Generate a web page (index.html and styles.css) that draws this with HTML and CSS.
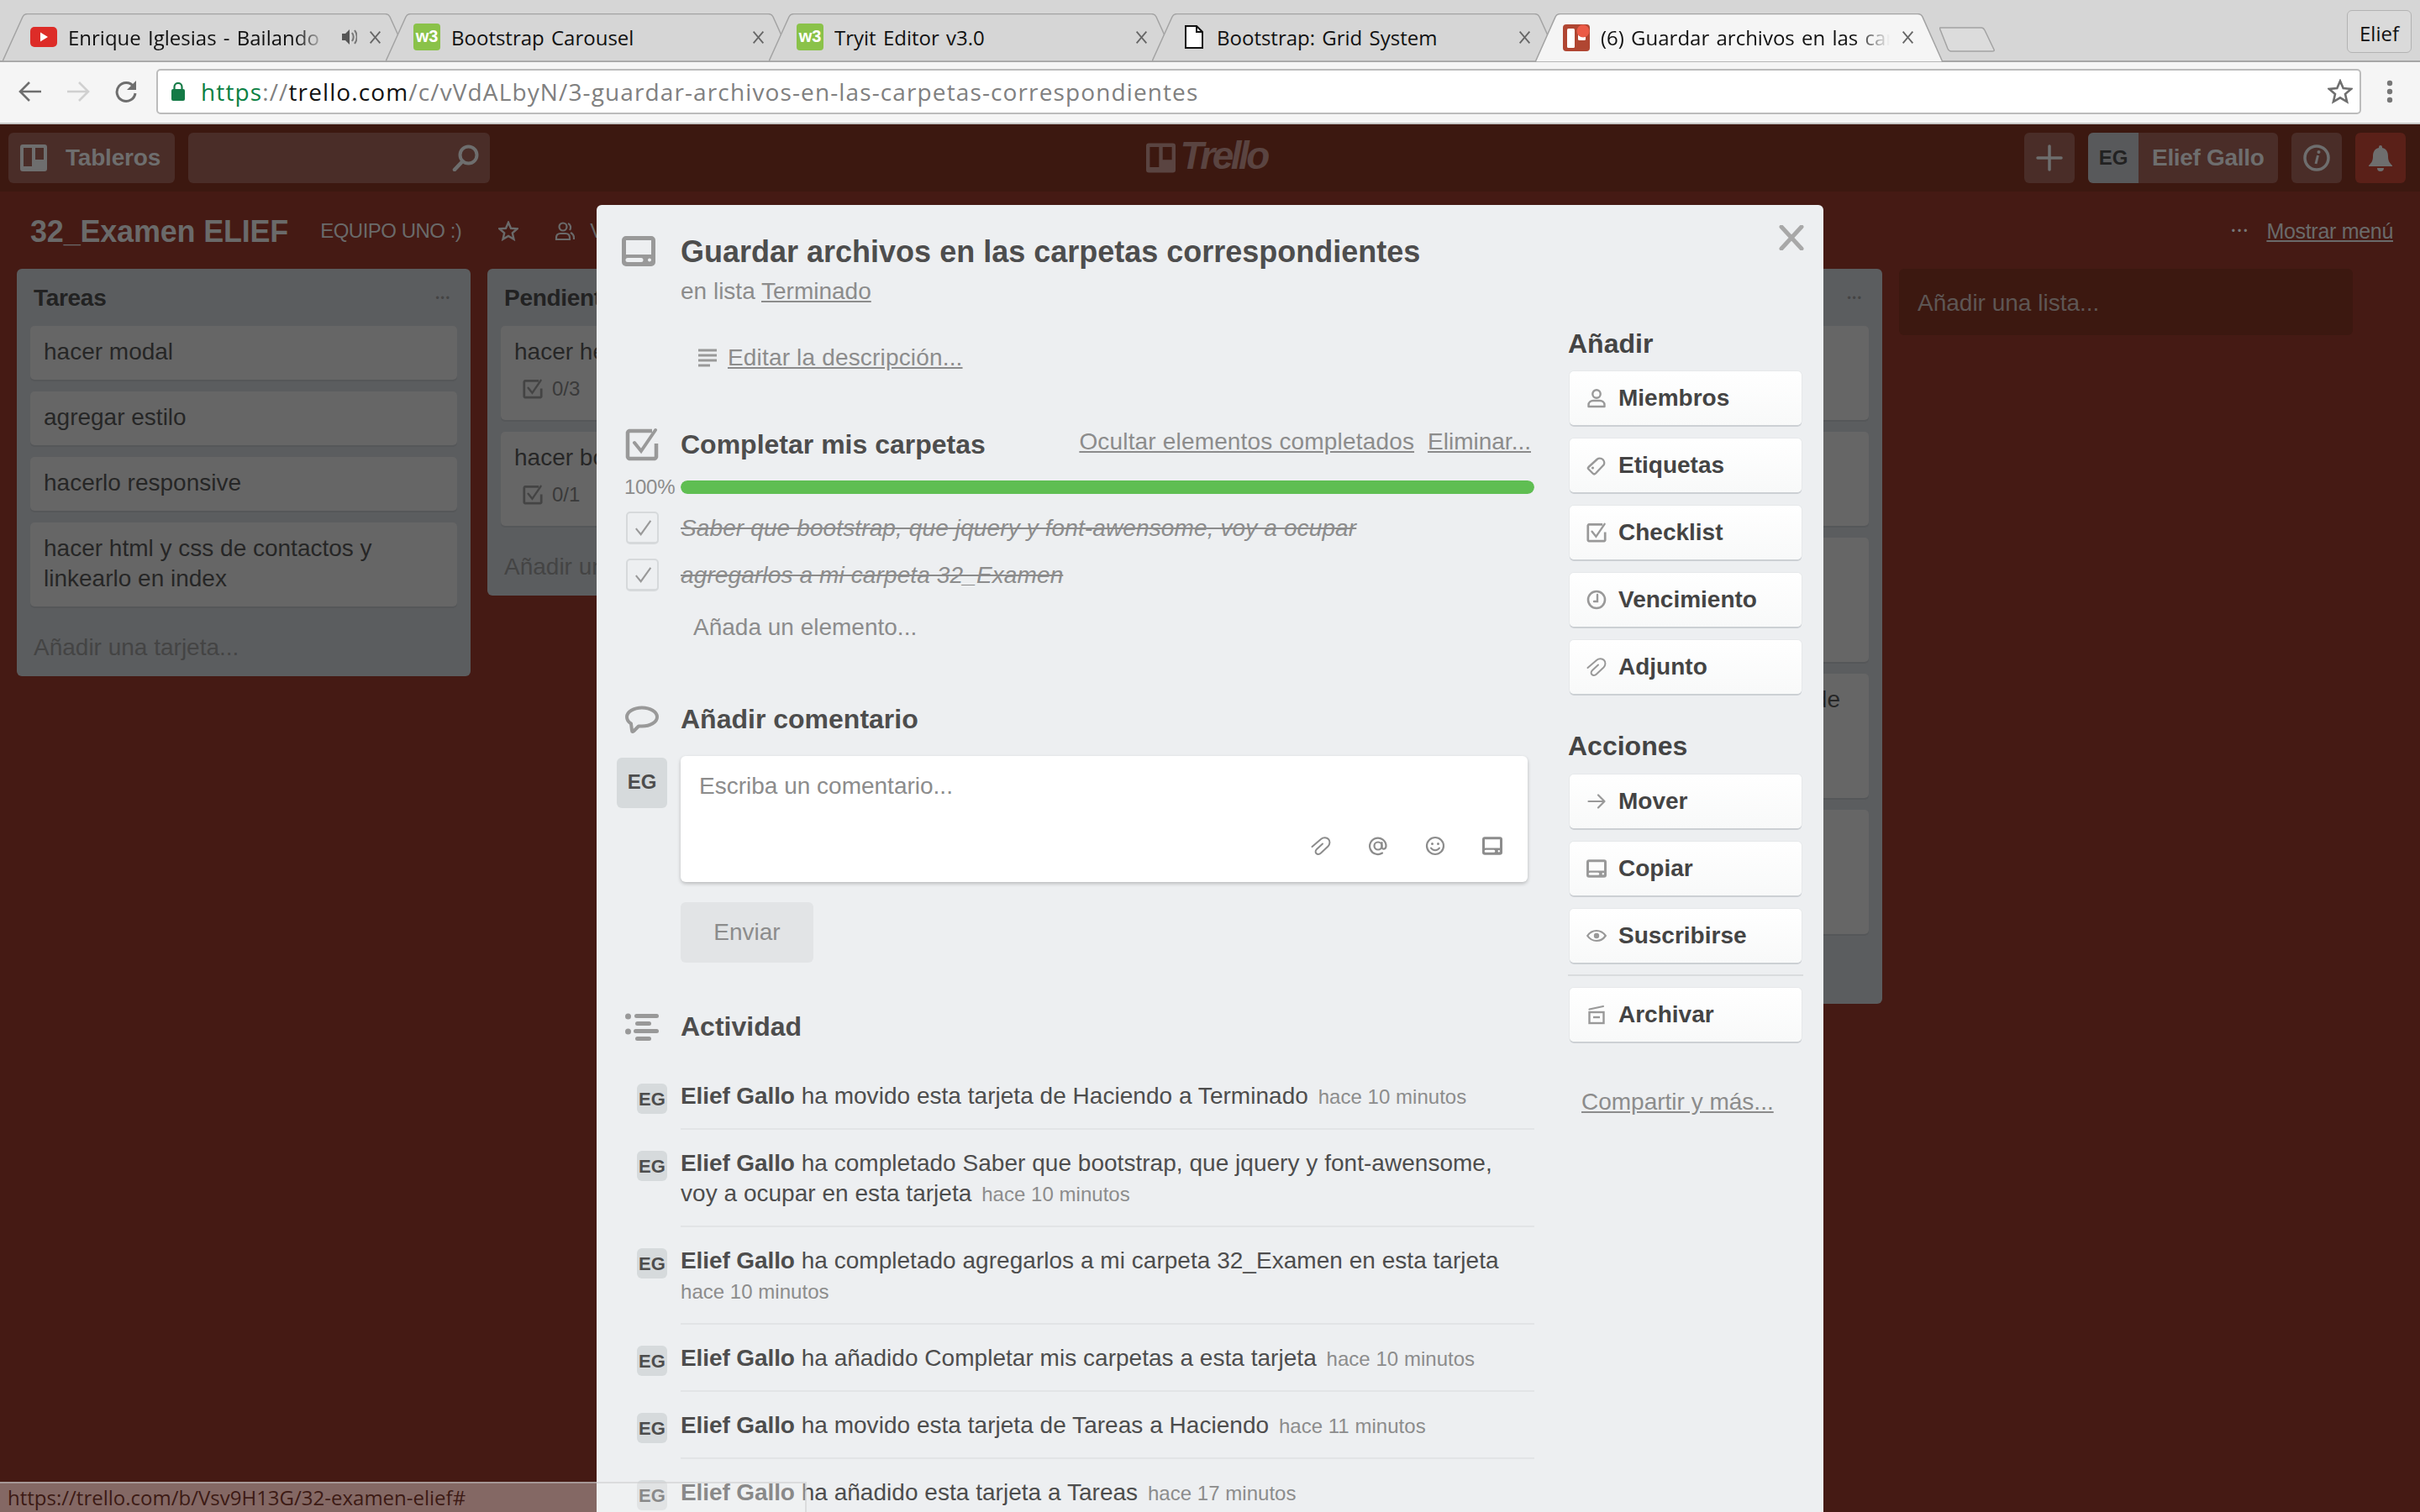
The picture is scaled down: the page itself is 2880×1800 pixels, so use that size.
FILE: index.html
```html
<!DOCTYPE html>
<html lang="es">
<head>
<meta charset="utf-8">
<title>Guardar archivos en las carpetas correspondientes</title>
<link rel="stylesheet" href="styles.css">
</head>
<body>
<svg class="defs" width="0" height="0" aria-hidden="true">
  <defs>
    <symbol id="i-card" viewBox="0 0 40 36"><path fill="currentColor" fill-rule="evenodd" d="M5 0h30a5 5 0 0 1 5 5v26a5 5 0 0 1-5 5H5a5 5 0 0 1-5-5V5a5 5 0 0 1 5-5zM5 5v17h30V5zM7 26a2 2 0 0 0 0 5h16a2 2 0 0 0 0-5zM31 28.500a2 2 0 1 0 4 0a2 2 0 1 0-4 0z"/></symbol>
    <symbol id="i-check" viewBox="0 0 40 40"><path fill="none" stroke="currentColor" stroke-width="4.500" stroke-linejoin="round" d="M32 4H5a3 3 0 0 0-2 2v29a3 3 0 0 0 2 2h30a3 3 0 0 0 2-2V19"/><path fill="none" stroke="currentColor" stroke-width="4" stroke-linecap="round" d="M11 18l8 10L36 3"/></symbol>
    <symbol id="i-person" viewBox="0 0 24 24"><circle cx="12" cy="7" r="4.700" fill="none" stroke="currentColor" stroke-width="2.400"/><path fill="none" stroke="currentColor" stroke-width="2.400" stroke-linejoin="round" d="M2.500 22v-2c0-3 2.500-5 5.500-5h8c3 0 5.500 2 5.500 5v2z"/></symbol>
    <symbol id="i-tag" viewBox="0 0 24 24"><path fill="none" stroke="currentColor" stroke-width="2.400" stroke-linejoin="round" d="M2.500 14L13 4.500c1-1 4.500-1.500 6.500 .5s2 5 1 6.500L11 21.500c-1 1-2.500 1-3.500 0l-5-5c-.7-.7-.7-1.800 0-2.500z"/><circle cx="7.500" cy="15" r="1.600" fill="currentColor"/></symbol>
    <symbol id="i-clock" viewBox="0 0 24 24"><circle cx="12" cy="12" r="10" fill="none" stroke="currentColor" stroke-width="2.600"/><path fill="none" stroke="currentColor" stroke-width="2.400" stroke-linecap="round" d="M13 6v8H9"/></symbol>
    <symbol id="i-clip" viewBox="0 0 24 24"><path fill="none" stroke="currentColor" stroke-width="2" stroke-linecap="round" d="M1.500 13L12 4c3-2.500 7-2 9 0s2 6-.5 8.500L12 20.500c-2 2-4.500 1.500-5.500 .5s-1.500-3 .5-5l7-6.500"/></symbol>
    <symbol id="i-arrow" viewBox="0 0 24 24"><path fill="none" stroke="currentColor" stroke-width="2.200" stroke-linecap="round" stroke-linejoin="round" d="M2.500 12h19M14 4.500l7.500 7.500-7.500 7.500"/></symbol>
    <symbol id="i-eye" viewBox="0 0 24 24"><path fill="none" stroke="currentColor" stroke-width="2.200" d="M1.200 12c5.500-8 16-8 21.600 0c-5.600 8-16.100 8-21.600 0z"/><circle cx="12" cy="12" r="3.200" fill="currentColor"/></symbol>
    <symbol id="i-archive" viewBox="0 0 24 24"><path fill="none" stroke="currentColor" stroke-width="2.200" stroke-linecap="round" d="M3.500 5.500L20 2"/><rect x="3.500" y="9" width="17" height="13" fill="none" stroke="currentColor" stroke-width="2.400"/><path fill="none" stroke="currentColor" stroke-width="2.400" d="M8 15h8"/></symbol>
    <symbol id="i-at" viewBox="0 0 24 24"><circle cx="12" cy="12" r="4.500" fill="none" stroke="currentColor" stroke-width="2.200"/><path fill="none" stroke="currentColor" stroke-width="2.200" stroke-linecap="round" d="M16.500 8v5.500c0 3 5 3 5-1.500A9.700 9.700 0 1 0 17 20.500"/></symbol>
    <symbol id="i-smile" viewBox="0 0 24 24"><circle cx="12" cy="12" r="10" fill="none" stroke="currentColor" stroke-width="2.200"/><circle cx="8.500" cy="9.500" r="1.500" fill="currentColor"/><circle cx="15.500" cy="9.500" r="1.500" fill="currentColor"/><path fill="none" stroke="currentColor" stroke-width="2" stroke-linecap="round" d="M7 14.500c2 3.500 8 3.500 10 0"/></symbol>
    <symbol id="i-close" viewBox="0 0 14 16"><path fill="none" stroke="currentColor" stroke-width="1.700" d="M1.500 1.500l11 13M12.500 1.500l-11 13"/></symbol>
    <symbol id="i-tab" viewBox="0 0 485 57" preserveAspectRatio="none"><path d="M0 57L24 4c1-2 3-3.500 6-3.500h425c3 0 5 1.500 6 3.500l24 53z"/></symbol>
    <symbol id="i-board" viewBox="0 0 32 32"><path fill="currentColor" fill-rule="evenodd" d="M3 0h26a3 3 0 0 1 3 3v26a3 3 0 0 1-3 3H3a3 3 0 0 1-3-3V3a3 3 0 0 1 3-3zM4 4v22h10V4zM18 4v14h10V4z"/></symbol>
  </defs>
</svg>

<div class="page">
  <div class="tabstrip">
    <div class="tab">
      <svg class="tab-bg"><use href="#i-tab"/></svg>
      <svg class="fav" viewBox="0 0 32 24"><rect width="32" height="24" rx="5" fill="#dd2c28"/><path d="M12 6.500l9 5.500-9 5.500z" fill="#fff"/></svg>
      <span class="tab-title fade">Enrique Iglesias - Bailando</span>
      <svg class="speaker" viewBox="0 0 18 24"><path d="M0 8h4l5-5v18l-5-5H0z" fill="#555"/><path d="M12 7c2 3 2 7 0 10M15 4c3.500 5 3.500 11 0 16" fill="none" stroke="#777" stroke-width="2"/></svg>
      <svg class="tab-x"><use href="#i-close"/></svg>
    </div>
    <div class="tab">
      <svg class="tab-bg"><use href="#i-tab"/></svg>
      <span class="fav w3">w3</span>
      <span class="tab-title">Bootstrap Carousel</span>
      <svg class="tab-x"><use href="#i-close"/></svg>
    </div>
    <div class="tab">
      <svg class="tab-bg"><use href="#i-tab"/></svg>
      <span class="fav w3">w3</span>
      <span class="tab-title">Tryit Editor v3.0</span>
      <svg class="tab-x"><use href="#i-close"/></svg>
    </div>
    <div class="tab">
      <svg class="tab-bg"><use href="#i-tab"/></svg>
      <svg class="fav doc" viewBox="0 0 22 28"><path d="M1 1h13l7 7v19H1z" fill="#fff" stroke="#111" stroke-width="2"/><path d="M14 1v7h7" fill="none" stroke="#111" stroke-width="2"/></svg>
      <span class="tab-title">Bootstrap: Grid System</span>
      <svg class="tab-x"><use href="#i-close"/></svg>
    </div>
    <div class="tab active">
      <svg class="tab-bg"><use href="#i-tab"/></svg>
      <svg class="fav" viewBox="0 0 32 32"><rect width="32" height="32" rx="4" fill="#b04632"/><rect x="5" y="5" width="9" height="23" rx="1.500" fill="#fff"/><rect x="18" y="5" width="9" height="14" rx="1.500" fill="#fff"/><circle cx="24" cy="8" r="7.500" fill="#eb5a46"/></svg>
      <span class="tab-title fade">(6) Guardar archivos en las carpetas correspondientes</span>
      <svg class="tab-x"><use href="#i-close"/></svg>
    </div>
    <svg class="newtab" viewBox="0 0 66 31"><path d="M1 2h49c2 0 3 1 4 3l11 23c.5 1.500 0 2-2 2H14c-2 0-3-1-4-3L.5 3c-.3-.8 0-1 .5-1z" fill="#dcdcdc" stroke="#a3a3a3" stroke-width="1.500"/></svg>
    <span class="profile">Elief</span>
  </div>

  <div class="toolbar">
    <svg class="nav" viewBox="0 0 28 26"><path d="M27 13H3M13 2L2 13l11 11" fill="none" stroke="#6e6e6e" stroke-width="2.600"/></svg>
    <svg class="nav" viewBox="0 0 28 26"><path d="M1 13h24M15 2l11 11-11 11" fill="none" stroke="#d0d0d0" stroke-width="2.600"/></svg>
    <svg class="nav reload" viewBox="0 0 28 28"><path d="M23 8A11 11 0 1 0 25 16" fill="none" stroke="#6e6e6e" stroke-width="3"/><path d="M26 1v11H15z" fill="#6e6e6e"/></svg>
    <div class="omnibox">
      <svg class="lock" viewBox="0 0 16 22"><rect y="8" width="16" height="14" rx="2" fill="#147a46"/><path d="M3.500 9V5.500a4.500 4.500 0 0 1 9 0V9" fill="none" stroke="#147a46" stroke-width="2.200"/></svg>
      <span class="url"><span class="u-green">https</span><span class="u-grey">://</span><span class="u-dark">trello.com</span><span class="u-grey">/c/vVdALbyN/3-guardar-archivos-en-las-carpetas-correspondientes</span></span>
      <svg class="star" viewBox="0 0 30 30"><path d="M15 2.500l3.700 8.600 9.300.8-7 6.100 2.100 9.100-8.100-4.800-8.100 4.800 2.100-9.100-7-6.100 9.300-.8z" fill="none" stroke="#6e6e6e" stroke-width="2.600"/></svg>
    </div>
    <svg class="kebab" viewBox="0 0 8 28"><circle cx="4" cy="4" r="3.200" fill="#777"/><circle cx="4" cy="14" r="3.200" fill="#777"/><circle cx="4" cy="24" r="3.200" fill="#777"/></svg>
  </div>

  <div class="app">
    <header class="topbar">
      <div class="top-left">
        <div class="hbtn boards"><svg class="hicon"><use href="#i-board"/></svg><span>Tableros</span></div>
        <div class="hbtn search"><svg class="hicon" viewBox="0 0 32 32"><circle cx="19.500" cy="12.500" r="10" fill="none" stroke="currentColor" stroke-width="4"/><path d="M12.500 20L3 30" fill="none" stroke="currentColor" stroke-width="4.500" stroke-linecap="round"/></svg></div>
      </div>
      <div class="logo">
        <svg class="logo-mark"><use href="#i-board"/></svg>
        <span class="logo-word">Trello</span>
      </div>
      <div class="top-right">
        <div class="hbtn square"><svg class="hicon" viewBox="0 0 32 32"><path d="M16 2v28M2 16h28" fill="none" stroke="currentColor" stroke-width="3.500" stroke-linecap="round"/></svg></div>
        <div class="hbtn me"><span class="me-av">EG</span><span class="me-name">Elief Gallo</span></div>
        <div class="hbtn square"><svg class="hicon" viewBox="0 0 32 32"><circle cx="16" cy="16" r="14" fill="none" stroke="currentColor" stroke-width="3.500"/><path d="M17.500 13l-2.500 10" fill="none" stroke="currentColor" stroke-width="3"/><circle cx="18.500" cy="9" r="2" fill="currentColor"/></svg></div>
        <div class="hbtn square bell"><svg class="hicon" viewBox="0 0 32 32"><path d="M16 1a2 2 0 0 1 2 2v1c5 1 7 5 7 10 0 6 2 8 5 11v1H2v-1c3-3 5-5 5-11 0-5 2-9 7-10V3a2 2 0 0 1 2-2zM12 28h8a4 4 0 0 1-8 0z" fill="currentColor"/></svg></div>
      </div>
    </header>

    <div class="boardhead">
      <h1 class="board-title">32_Examen ELIEF</h1>
      <span class="team">EQUIPO UNO :)</span>
      <svg class="bh-icon star-b" viewBox="0 0 24 24"><path d="M12 1.800l3 7 7.500.6-5.700 5 1.700 7.400-6.500-3.900-6.500 3.900 1.700-7.400-5.700-5 7.500-.6z" fill="none" stroke="currentColor" stroke-width="2.400"/></svg>
      <svg class="bh-icon person-b" viewBox="0 0 24 24"><circle cx="10" cy="7" r="4.500" fill="none" stroke="currentColor" stroke-width="2.200"/><path d="M2 22v-2c0-3 2-5 5-5h6c3 0 5 2 5 5v2zM16 3c3 1 4 5 2 8M19 14c2 1 4 3 4 6v2" fill="none" stroke="currentColor" stroke-width="2.200"/></svg>
      <span class="team vis">Visible</span>
      <span class="menu-dots">•••</span>
      <a class="show-menu">Mostrar menú</a>
    </div>

    <div class="lists">
      <section class="list">
        <div class="list-head"><h2>Tareas</h2><span class="dots">•••</span></div>
        <div class="card">hacer modal</div>
        <div class="card">agregar estilo</div>
        <div class="card">hacerlo responsive</div>
        <div class="card">hacer html y css de contactos y linkearlo en index</div>
        <div class="add-card">Añadir una tarjeta...</div>
      </section>
      <section class="list">
        <div class="list-head"><h2>Pendientes</h2><span class="dots">•••</span></div>
        <div class="card h112">hacer header
          <div class="badge"><svg class="badge-icon"><use href="#i-check"/></svg>0/3</div>
        </div>
        <div class="card h112">hacer body
          <div class="badge"><svg class="badge-icon"><use href="#i-check"/></svg>0/1</div>
        </div>
        <div class="add-card">Añadir una tarjeta...</div>
      </section>
      <section class="list"></section>
      <section class="list">
        <div class="list-head end"><span class="dots">•••</span></div>
        <div class="card h112"></div>
        <div class="card h112"></div>
        <div class="card h148"></div>
        <div class="card h148 card-end">de</div>
        <div class="card h148"></div>
        <div class="add-card">&nbsp;</div>
      </section>
      <div class="add-list">Añadir una lista...</div>
    </div>
  </div>

  <div class="modal">
    <svg class="modal-x" viewBox="0 0 30 30"><path d="M3 2l24 26M27 2L3 28" fill="none" stroke="currentColor" stroke-width="5" stroke-linecap="round"/></svg>
    <div class="modal-main">
      <div class="m-row title-row">
        <div class="gutter g-card"><svg class="ic-card"><use href="#i-card"/></svg></div>
        <div class="m-body">
          <h2 class="m-title">Guardar archivos en las carpetas correspondientes</h2>
          <p class="m-sub">en lista <a class="lnk">Terminado</a></p>
        </div>
      </div>

      <div class="desc-row">
        <svg class="ic-desc" viewBox="0 0 24 22"><path d="M1 2h22M1 8h22M1 14h22M1 20h14" fill="none" stroke="currentColor" stroke-width="3"/></svg>
        <a class="lnk wide">Editar la descripción...</a>
      </div>

      <div class="m-row head-check">
        <div class="gutter"><svg class="ic-sec"><use href="#i-check"/></svg></div>
        <h3 class="m-head">Completar mis carpetas</h3>
        <div class="check-links"><a class="lnk wide">Ocultar elementos completados</a><a class="lnk">Eliminar...</a></div>
      </div>

      <div class="m-row progress">
        <div class="gutter pct">100%</div>
        <div class="bar"><div class="bar-fill" style="width:100%"></div></div>
      </div>

      <div class="m-row item">
        <div class="gutter"><span class="cbox"><svg viewBox="0 0 24 24"><path d="M5 13l5 6L20 5" fill="none" stroke="currentColor" stroke-width="1.800"/></svg></span></div>
        <span class="item-text">Saber que bootstrap, que jquery y font-awensome, voy a ocupar</span>
      </div>
      <div class="m-row item">
        <div class="gutter"><span class="cbox"><svg viewBox="0 0 24 24"><path d="M5 13l5 6L20 5" fill="none" stroke="currentColor" stroke-width="1.800"/></svg></span></div>
        <span class="item-text">agregarlos a mi carpeta 32_Examen</span>
      </div>
      <div class="add-item">Añada un elemento...</div>

      <div class="m-row head-comment">
        <div class="gutter"><svg class="ic-sec small" viewBox="0 0 40 32"><path d="M20 2c10 0 18 5 18 11s-8 11-18 11h-4l-6 6c-1 .8-2 .5-2-1l-1-8C4 19 2 16 2 13 2 7 10 2 20 2z" fill="none" stroke="currentColor" stroke-width="4" stroke-linejoin="round"/></svg></div>
        <h3 class="m-head">Añadir comentario</h3>
      </div>

      <div class="m-row comment-row">
        <div class="gutter av-gutter"><span class="avatar">EG</span></div>
        <div class="comment-box">
          <span class="placeholder">Escriba un comentario...</span>
          <div class="comment-tools">
            <svg><use href="#i-clip"/></svg>
            <svg><use href="#i-at"/></svg>
            <svg><use href="#i-smile"/></svg>
            <svg><use href="#i-card"/></svg>
          </div>
        </div>
      </div>

      <div class="send">Enviar</div>

      <div class="m-row head-activity">
        <div class="gutter"><svg class="ic-sec small" viewBox="0 0 40 33"><g fill="currentColor"><circle cx="3.500" cy="4" r="3.500"/><circle cx="3.500" cy="22" r="3.500"/><rect x="11" y="1" width="29" height="5" rx="2.500"/><rect x="12" y="10" width="19" height="5" rx="2.500"/><rect x="10" y="19" width="30" height="5" rx="2.500"/><rect x="12" y="28" width="19" height="5" rx="2.500"/></g></svg></div>
        <h3 class="m-head">Actividad</h3>
      </div>

      <div class="activity">
        <div class="act"><span class="av-small">EG</span><div class="act-body"><strong>Elief Gallo</strong> ha movido esta tarjeta de Haciendo a Terminado <time>hace 10 minutos</time></div></div>
        <div class="act"><span class="av-small">EG</span><div class="act-body"><strong>Elief Gallo</strong> ha completado Saber que bootstrap, que jquery y font-awensome, voy a ocupar en esta tarjeta <time>hace 10 minutos</time></div></div>
        <div class="act"><span class="av-small">EG</span><div class="act-body own-line"><strong>Elief Gallo</strong> ha completado agregarlos a mi carpeta 32_Examen en esta tarjeta <time>hace 10 minutos</time></div></div>
        <div class="act"><span class="av-small">EG</span><div class="act-body"><strong>Elief Gallo</strong> ha añadido Completar mis carpetas a esta tarjeta <time>hace 10 minutos</time></div></div>
        <div class="act"><span class="av-small">EG</span><div class="act-body"><strong>Elief Gallo</strong> ha movido esta tarjeta de Tareas a Haciendo <time>hace 11 minutos</time></div></div>
        <div class="act"><span class="av-small">EG</span><div class="act-body"><strong>Elief Gallo</strong> ha añadido esta tarjeta a Tareas <time>hace 17 minutos</time></div></div>
      </div>
    </div>

    <aside class="modal-side">
      <h3 class="side-head">Añadir</h3>
      <div class="sbtn"><svg><use href="#i-person"/></svg>Miembros</div>
      <div class="sbtn"><svg><use href="#i-tag"/></svg>Etiquetas</div>
      <div class="sbtn"><svg><use href="#i-check"/></svg>Checklist</div>
      <div class="sbtn"><svg><use href="#i-clock"/></svg>Vencimiento</div>
      <div class="sbtn"><svg><use href="#i-clip"/></svg>Adjunto</div>
      <h3 class="side-head second">Acciones</h3>
      <div class="sbtn"><svg><use href="#i-arrow"/></svg>Mover</div>
      <div class="sbtn"><svg><use href="#i-card"/></svg>Copiar</div>
      <div class="sbtn"><svg><use href="#i-eye"/></svg>Suscribirse</div>
      <hr class="side-rule">
      <div class="sbtn"><svg><use href="#i-archive"/></svg>Archivar</div>
      <a class="lnk share">Compartir y más...</a>
    </aside>
  </div>

  <div class="status">https://trello.com/b/Vsv9H13G/32-examen-elief#</div>
</div>
</body>
</html>
```

FILE: styles.css
```css
* { box-sizing: border-box; }
html, body { margin: 0; height: 100%; }
body { font-family: "Liberation Sans", Arial, sans-serif; font-size: 28px; color: #4d4d4d; overflow: hidden; }
h1, h2, h3, p { margin: 0; }
.defs { position: absolute; }
.page { position: relative; width: 2880px; height: 1800px; overflow: hidden; display: flex; flex-direction: column; }

/* browser chrome */
.tabstrip { height: 74px; flex: none; background: #d6d6d6; border-bottom: 2px solid #a6a6a6; display: flex; align-items: flex-end; padding-left: 3px; font-family: "Open Sans", "DejaVu Sans", sans-serif; position: relative; }
.tab { position: relative; width: 485px; height: 57px; margin-right: -29px; margin-bottom: -1px; display: flex; align-items: center; padding: 0 0 1px 33px; flex: none; color: #111; font-size: 24px; word-spacing: 2px; }
.tab-bg { position: absolute; left: 0; top: 0; width: 100%; height: 100%; fill: #d6d6d6; stroke: #a3a3a3; stroke-width: 1.5px; }
.tab.active { z-index: 2; margin-bottom: -2px; height: 58px; }
.tab.active .tab-bg { fill: #f5f5f5; }
.fav { position: relative; flex: none; width: 32px; height: 32px; }
.w3 { background: #8ac249; border-radius: 4px; color: #fff; font: bold 20px/30px "Liberation Sans", sans-serif; text-align: center; }
.doc { width: 22px; height: 28px; margin: 0 3px 0 6px; }
.tab-title { position: relative; margin-left: 13px; white-space: nowrap; overflow: hidden; flex: 1; min-width: 0; margin-right: 14px; }
.fade { -webkit-mask-image: linear-gradient(to right, #000 88%, transparent 100%); mask-image: linear-gradient(to right, #000 88%, transparent 100%); }
.speaker { position: relative; flex: none; width: 18px; height: 24px; margin-right: 14px; margin-left: 4px; }
.tab-x { position: relative; flex: none; width: 15px; height: 17px; margin-right: 34px; color: #666; }
.newtab { position: relative; width: 66px; height: 31px; flex: none; margin: 0 0 10px 25px; z-index: 1; }
.profile { margin-left: auto; width: 77px; height: 51px; margin-bottom: 9px; margin-right: 10px; border: 1px solid #b3b3b3; border-radius: 6px; text-align: center; line-height: 54px; font-size: 24px; color: #111; background: #dadada; }

.toolbar { height: 74px; flex: none; background: #f5f5f5; border-bottom: 2px solid #c8c8c8; display: flex; align-items: center; padding: 0 32px 2px 22px; }
.nav { width: 28px; height: 26px; flex: none; margin-right: 29px; }
.nav.reload { margin-right: 22px; height: 28px; }
.omnibox { flex: 1; height: 54px; background: #fff; border: 2px solid #bcbcbc; border-radius: 5px; display: flex; align-items: center; padding: 0 8px 0 16px; margin-right: 30px; }
.lock { width: 16px; height: 22px; flex: none; margin-right: 19px; }
.url { flex: 1; font-family: "Open Sans", "DejaVu Sans", sans-serif; font-size: 28px; letter-spacing: 1.120px; white-space: nowrap; }
.u-green { color: #0b8043; }
.u-grey { color: #808080; }
.u-dark { color: #111; }
.star { width: 30px; height: 30px; flex: none; }
.kebab { width: 8px; height: 28px; flex: none; }

/* trello app behind the dim */
.app { flex: 1; background: #451a14; display: flex; flex-direction: column; min-height: 0; }
.topbar { height: 80px; flex: none; background: #3c1810; display: grid; grid-template-columns: 1fr auto 1fr; align-items: center; padding: 0 17px 0 10px; }
.top-left, .top-right { display: flex; gap: 16px; }
.top-right { justify-content: flex-end; }
.hbtn { height: 60px; border-radius: 6px; background: #4a2d28; display: flex; align-items: center; color: #6e6e6e; font-weight: bold; overflow: hidden; }
.hicon { width: 32px; height: 32px; flex: none; color: #6e6e6e; }
.boards { width: 198px; padding-left: 14px; letter-spacing: -.2px; }
.boards span { margin-left: 22px; }
.search { width: 359px; justify-content: flex-end; padding-right: 13px; }
.square { width: 60px; justify-content: center; }
.bell { background: #5a2018; }
.me { width: 226px; }
.me-av { width: 60px; height: 60px; background: #58595b; color: #222; font-size: 24px; line-height: 60px; text-align: center; flex: none; }
.me-name { margin-left: 16px; letter-spacing: -.3px; }
.logo { display: flex; align-items: center; color: #5a4441; }
.logo-mark { width: 35px; height: 36px; margin-right: 6px; }
.logo-word { font: italic bold 46px/46px "Liberation Sans", sans-serif; letter-spacing: -3.500px; margin-top: -6px; width: 105px; }

.boardhead { height: 92px; flex: none; display: flex; align-items: center; padding: 2px 32px 0 36px; color: #6a6a6a; }
.board-title { font-size: 36px; line-height: 44px; font-weight: bold; letter-spacing: -.2px; margin: 2px 38px 0 0; }
.team { font-size: 24px; letter-spacing: -.5px; margin-right: 44px; white-space: nowrap; }
.bh-icon { width: 24px; height: 24px; flex: none; }
.star-b { margin-right: 43px; }
.person-b { margin-right: 18px; }
.vis { margin-right: 0; }
.menu-dots { margin-left: auto; font-size: 12px; letter-spacing: 3px; margin-right: 20px; color: #777; }
.show-menu { font-size: 25px; text-decoration: underline; letter-spacing: -.3px; }

.lists { flex: 1; min-height: 0; display: flex; align-items: flex-start; gap: 20px; padding-left: 20px; overflow: hidden; }
.list { width: 540px; flex: none; background: #5b5d5f; border-radius: 6px; padding: 17px 16px 15px; color: #262626; }
.list-head { display: flex; justify-content: space-between; align-items: center; height: 36px; margin: 0 4px 15px; }
.list-head.end { justify-content: flex-end; }
.list-head h2 { font-size: 28px; line-height: 36px; color: #222; letter-spacing: -.3px; }
.dots { font-size: 12px; letter-spacing: 2px; color: #444; margin-right: 3px; }
.card { background: #666; border-radius: 5px; box-shadow: 0 2px 0 #555759; padding: 13px 16px 15px; line-height: 36px; margin-bottom: 14px; min-height: 64px; white-space: normal; }
.h112 { height: 112px; }
.h148 { height: 148px; }
.card-end { text-align: right; padding-right: 34px; }
.badge { display: flex; align-items: center; color: #3a3a3a; font-size: 24px; line-height: 28px; margin: 12px 0 0 10px; }
.badge-icon { width: 24px; height: 24px; margin-right: 11px; color: #444; }
.add-card { color: #444; line-height: 36px; margin: 31px 4px 0; padding-bottom: 1px; white-space: nowrap; }
.add-list { width: 540px; height: 79px; flex: none; background: #3c1810; border-radius: 6px; color: #5e5654; line-height: 81px; padding-left: 22px; }

/* card modal */
.modal { position: absolute; left: 710px; top: 244px; width: 1460px; height: 1556px; background: #edeff1; border-radius: 6px 6px 0 0; display: flex; overflow: hidden; }
.modal-x { position: absolute; right: 23px; top: 24px; width: 30px; height: 30px; color: #a8a8a8; }
.modal-main { width: 1116px; flex: none; padding-top: 34px; }
.modal-side { width: 280px; flex: none; margin-left: 40px; padding-top: 147px; display: flex; flex-direction: column; }
.m-row { display: flex; align-items: center; }
.gutter { width: 100px; flex: none; padding-left: 34px; display: flex; align-items: center; color: #999; }
.title-row { align-items: flex-start; }
.g-card { padding-left: 30px; padding-top: 3px; }
.ic-card { width: 40px; height: 36px; }
.m-title { font-size: 36px; line-height: 44px; color: #4d4d4d; }
.m-sub { line-height: 36px; margin-top: 7px; color: #8c8c8c; }
.lnk { color: #8c8c8c; text-decoration: underline; }
.lnk.wide { letter-spacing: .17px; }
.desc-row { display: flex; align-items: center; margin-top: 43px; padding-left: 120px; height: 36px; color: #999; }
.ic-desc { width: 24px; height: 22px; margin-right: 12px; flex: none; }
.head-check { margin-top: 63px; height: 44px; }
.ic-sec { width: 40px; height: 40px; flex: none; }
.ic-sec.small { height: 33px; }
.m-head { font-size: 32px; line-height: 44px; color: #4d4d4d; }
.check-links { margin-left: auto; display: flex; gap: 16px; padding-right: 4px; margin-top: -6px; }
.progress { margin-top: 15px; height: 28px; }
.pct { font-size: 24px; padding-left: 33px; color: #8c8c8c; letter-spacing: -.3px; }
.bar { flex: 1; height: 16px; background: #dfe2e4; border-radius: 8px; overflow: hidden; }
.bar-fill { height: 100%; background: #5fbe52; border-radius: 8px; }
.item { margin-top: 0; height: 57px; }
.progress + .item { margin-top: 6px; }
.item + .item { margin-top: -1px; }
.cbox { width: 39px; height: 39px; border: 2px solid #d6d9db; border-bottom-width: 3px; border-radius: 5px; display: flex; align-items: center; justify-content: center; margin-left: 1px; color: #999; }
.cbox svg { width: 28px; height: 28px; }
.item-text { font-style: italic; text-decoration: line-through; color: #8c8c8c; line-height: 36px; letter-spacing: .12px; }
.add-item { margin: 16px 0 0 115px; line-height: 36px; color: #8c8c8c; }
.head-comment { margin-top: 69px; height: 44px; }
.comment-row { align-items: flex-start; margin-top: 22px; }
.av-gutter { padding-left: 24px; padding-top: 2px; }
.avatar { width: 60px; height: 60px; background: #d6dadc; border-radius: 6px; color: #4d4d4d; font-weight: bold; font-size: 24px; line-height: 58px; text-align: center; display: block; }
.comment-box { width: 1008px; height: 150px; background: #fff; border-radius: 6px; box-shadow: 0 2px 4px rgba(0,0,0,.22); padding: 18px 30px 31px 22px; display: flex; flex-direction: column; justify-content: space-between; }
.placeholder { line-height: 36px; color: #8c8c8c; }
.comment-tools { display: flex; justify-content: flex-end; gap: 44px; color: #8c8c8c; }
.comment-tools svg { width: 24px; height: 24px; }
.send { width: 158px; height: 72px; margin: 24px 0 0 100px; background: #e2e4e6; border-radius: 6px; color: #8c8c8c; line-height: 72px; text-align: center; }
.head-activity { margin-top: 54px; height: 44px; }
.activity { margin-top: 21px; }
.act { display: flex; align-items: flex-start; padding-left: 48px; }
.av-small { width: 36px; height: 36px; margin: 25px 16px 0 0; flex: none; background: #d6dadc; border-radius: 6px; font-weight: bold; font-size: 22px; line-height: 38px; text-align: center; color: #4d4d4d; }
.act-body { flex: 1; padding: 22px 24px 20px 0; border-bottom: 2px solid #e2e4e6; line-height: 36px; color: #4d4d4d; letter-spacing: .03px; }
.act-body strong { font-weight: bold; letter-spacing: -.1px; }
.act-body time { font-size: 24px; line-height: 1; color: #8c8c8c; white-space: nowrap; margin-left: 4px; }
.act-body.own-line time { margin-left: 0; }

.side-head { font-size: 32px; line-height: 36px; color: #444; }
.side-head.second { margin-top: 28px; }
.side-head + .sbtn { margin-top: 15px; }
.side-head.second + .sbtn { margin-top: 16px; }
.sbtn { width: 276px; height: 64px; margin: 0 0 16px 2px; flex: none; background: linear-gradient(#fff, #f8f9f9); border-radius: 5px; box-shadow: 0 2px 0 #ccd0d4, 0 0 0 1px #e6e8ea; display: flex; align-items: center; padding-left: 20px; font-weight: bold; color: #444; }
.sbtn svg { width: 24px; height: 24px; margin-right: 14px; color: #999; flex: none; }
.side-rule { width: 280px; height: 2px; margin: -2px 0 14px 0; border: 0; background: #d9dcde; flex: none; }
.share { margin: 38px 0 0 16px; line-height: 36px; }

/* link status bubble */
.status { position: absolute; left: 0; top: 1764px; width: 960px; height: 36px; background: rgba(245,245,245,.36); border-top: 2px solid rgba(200,200,200,.5); border-right: 2px solid rgba(200,200,200,.5); color: #3c1a14; font-family: "Open Sans", "DejaVu Sans", sans-serif; font-size: 24px; line-height: 34px; padding-left: 9px; white-space: nowrap; }
```
